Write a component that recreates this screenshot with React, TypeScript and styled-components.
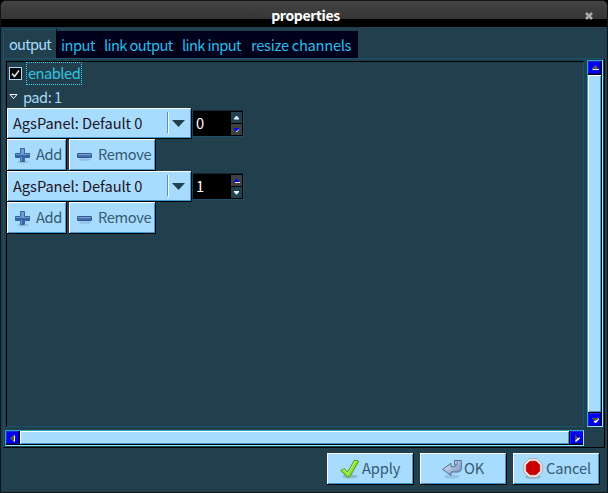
import React from "react";
import styled, { createGlobalStyle } from "styled-components";

const Global = createGlobalStyle`
  * { box-sizing: border-box; }
  body { margin: 0; background: #000; overflow: hidden; }
  button, input { font: inherit; margin: 0; }
`;

const FONT = `"Noto Sans CJK SC", "Noto Sans", sans-serif`;

const Window = styled.div`
  width: 608px;
  height: 493px;
  display: flex;
  flex-direction: column;
  background: #213f4d;
  border: 1px solid #101416;
  border-radius: 6px 6px 0 0;
  overflow: hidden;
  font: 14.67px/20px ${FONT};
  color: #a8d8f8;
  white-space: nowrap;
`;

const TitleBar = styled.header`
  height: 26px;
  flex: none;
  display: grid;
  grid-template-columns: 28px 1fr 28px;
  background: linear-gradient(#444 0, #353535 18px, #000 18px);
  color: #fff;
  font-weight: bold;
  text-align: center;
`;

const Title = styled.span`
  padding: 4px 0 0 3px;
  font-size: 14px;
  letter-spacing: -0.35px;
`;

const Close = styled.svg`
  margin: 9px 0 0 4px;
`;

const Notebook = styled.main`
  flex: none;
  height: 421px;
  padding: 2px 2px 0 2px;
`;

const Tabs = styled.nav`
  height: 29px;
  display: flex;
  align-items: flex-end;
`;

const Tab = styled.div<{ $width: number; $tracking: number; $active?: boolean }>`
  width: ${(p) => p.$width}px;
  height: ${(p) => (p.$active ? 29 : 27)}px;
  padding: ${(p) => (p.$active ? "4px 0 0 5px" : "4px 0 0 4px")};
  letter-spacing: ${(p) => p.$tracking}px;
  background: ${(p) => (p.$active ? "#213f4d" : "#00001c")};
  color: ${(p) => (p.$active ? "#a8dcff" : "#28bde8")};
  border: solid ${(p) => (p.$active ? "#1d5167" : "#061018")};
  border-width: ${(p) => (p.$active ? "1px 0 0 1px" : "0 1px 0 0")};
  border-right: 1px solid #000;
`;

const Page = styled.section`
  height: 390px;
  display: grid;
  grid-template-columns: 579px 16px;
  grid-template-rows: 367px 16px;
  column-gap: 3px;
  row-gap: 3px;
  padding: 1px 0 0 1px;
  border: 1px solid #1d5167;
  border-right-color: #000;
  border-bottom-color: #000;
`;

const View = styled.div`
  border: 1px solid #1d5167;
  border-top-color: #000;
  border-left-color: #000;
  margin: 1px 0 0 1px;
`;

const Line = styled.div<{ $h: number }>`
  height: ${(p) => p.$h}px;
  display: flex;
  align-items: flex-start;
`;

const Check = styled.span`
  width: 13px;
  height: 13px;
  margin: 5px 0 0 2px;
  border: 1px solid #a8dcff;
  background: #000;
  svg { display: block; }
`;

const CheckLabel = styled.span`
  width: 56px;
  height: 23px;
  margin: 0 0 0 4px;
  padding: 0 0 0 1px;
  border: 1px dotted #38d4f8;
  color: #31c4e0;
  letter-spacing: -0.5px;
`;

const Expander = styled.svg`
  margin: 6px 5px 0 2px;
`;

const PadLabel = styled.span`
  letter-spacing: -0.5px;
`;

const Combo = styled.div`
  width: 185px;
  height: 31px;
  display: flex;
  padding: 4px 0 0 6px;
  color: #20141c;
  background: #a8dcff;
  border: solid #000;
  border-width: 0 1px 1px 0;
  box-shadow: inset 1px 1px #fff, inset -1px -1px #4397cc;
`;

const ComboText = styled.span`
  width: 154px;
  padding-top: 1px;
  letter-spacing: -0.05px;
`;

const Raised = styled.button<{ $w: number }>`
  width: ${(p) => p.$w}px;
  height: 32px;
  display: flex;
  align-items: center;
  color: #345b70;
  background: #a8dcff;
  border: solid #000;
  border-width: 0 1px 1px 0;
  box-shadow: inset 1px 1px #fff, inset -1px -1px #4397cc;
`;

const PadButton = styled(Raised)`
  margin-right: 2px;
  padding: 0 0 1px 8px;
  letter-spacing: -0.35px;
  svg { margin: 2px 5px 0 0; }
`;

const DialogButton = styled(Raised)<{ $inset: number; $gap: number }>`
  padding: 0 0 2px ${(p) => p.$inset}px;
  letter-spacing: -0.15px;
  svg { margin: 2px ${(p) => p.$gap}px 0 0; }
`;

const Spin = styled.div`
  width: 51px;
  height: 27px;
  margin: 2px 0 0 1px;
  display: grid;
  grid-template-columns: 38px 11px;
  border: 1px solid #1d5167;
  border-top-color: #102630;
  border-left: 0;
  background: #000;
  color: #fff;
`;

const SpinValue = styled.span`
  padding: 2px 0 0 3px;
`;

const Steppers = styled.div`
  display: grid;
  grid-template-rows: 11px 11px;
  padding-top: 1px;
  gap: 1px;
`;

const Step = styled.div<{ $off?: boolean }>`
  background: ${(p) => (p.$off ? "#404040" : "#213f4d")};
  svg { display: block; }
`;

const ScrollBar = styled.div<{ $vertical?: boolean }>`
  display: flex;
  flex-direction: ${(p) => (p.$vertical ? "column" : "row")};
  border: 1px solid #25a9c4;
  border-right-color: #8cecff;
  border-bottom-color: #8cecff;
  background: #000;
`;

const ScrollButton = styled.div`
  width: 13px;
  height: 13px;
  flex: none;
  background: #0000f6;
  border: 1px solid #2424e0;
  border-right-color: #0000a0;
  border-bottom-color: #0000a0;
  svg { display: block; }
`;

const Thumb = styled.div<{ $vertical?: boolean }>`
  flex: 1;
  margin: ${(p) => (p.$vertical ? "1px 1px 1px 0" : "0 1px 1px 1px")};
  background: #a8dcff;
  box-shadow: inset 1px 1px #fff, inset -1px -1px #4397cc;
`;

const Actions = styled.footer`
  flex: 1;
  display: flex;
  justify-content: flex-end;
  gap: 6px;
  padding: 5px 7px 0 0;
`;

const Plus = () => (
  <svg width="16" height="17" viewBox="0 0 16 17">
    <ellipse cx="8" cy="15" rx="6" ry="1.5" fill="#78a5c6" opacity=".5" />
    <path d="M5.5 1.5h4v5h5v4h-5v4h-4v-4h-5v-4h5z" fill="#7399c8" stroke="#3465a4" strokeLinejoin="round" />
    <path d="M7 8h7v2H9v4H7v-4H1V8z" fill="#3465a4" />
  </svg>
);

const Minus = () => (
  <svg width="16" height="17" viewBox="0 0 16 17">
    <ellipse cx="8" cy="12.5" rx="6" ry="1.3" fill="#78a5c6" opacity=".5" />
    <rect x=".5" y="6.5" width="14" height="4" rx=".5" fill="#4670b0" stroke="#2d5790" />
    <path d="M1 7.5h13" stroke="#82a3d0" />
  </svg>
);

const ApplyIcon = () => (
  <svg width="20" height="20" viewBox="0 0 20 20">
    <ellipse cx="10" cy="17.5" rx="8" ry="2" fill="#638da1" opacity=".4" />
    <path d="M.8 11.5 4.4 9.6l3.2 3.6L14.6 1l4 1.2L9.8 17.8H7z" fill="#8ae234" stroke="#4e9a06" strokeLinejoin="round" />
    <path d="m2.6 11.7 1.5-.8 3.6 4L15.2 2.3l1.6.4" fill="none" stroke="#c3f58b" />
  </svg>
);

const OkIcon = () => (
  <svg width="20" height="20" viewBox="0 0 20 20">
    <defs>
      <linearGradient id="ok" x2="1" y2="1">
        <stop stopColor="#edf4ff" />
        <stop offset="1" stopColor="#6988b7" />
      </linearGradient>
    </defs>
    <ellipse cx="10" cy="17.5" rx="8" ry="2" fill="#638da1" opacity=".3" />
    <path d="M12.5 1.5h6.8v8c0 2.2-1.2 3.5-3.5 3.5H9v3.5L.7 10.3 9 4.3v3.4h3.4c1 0 1.3-.6 1.3-1.7h-1.2z" fill="url(#ok)" stroke="#506c92" strokeLinejoin="round" />
    <path d="M13.7 6h1.6V2.5" fill="none" stroke="#506c92" strokeWidth=".7" />
  </svg>
);

const StopIcon = () => (
  <svg width="20" height="21" viewBox="0 0 20 21">
    <ellipse cx="10" cy="18.9" rx="8" ry="1.8" fill="#638da1" opacity=".5" />
    <path d="M6 .7h8l5.3 5.5v7.6L14 19.3H6L.7 13.8V6.2z" fill="#eee" stroke="#a7a7a7" />
    <path d="M6.9 3.2h6.2L16.8 7v6l-3.7 3.8H6.9L3.2 13V7z" fill="#c00" stroke="#a40000" strokeWidth=".6" />
  </svg>
);

const SpinArrow = ({ down, blue }: { down?: boolean; blue?: boolean }) => (
  <svg width="11" height="11" viewBox="0 0 11 11">
    <path d={down ? "M3 4h5v1L6 7.5H5L3 5z" : "M3 7.5h5v-1L6 4H5L3 6.5z"} fill={blue ? "#0000f0" : "#e4f8ff"} />
    {blue && <path d={down ? "M8 5v1L6 8H5V7h1z" : "M4 7h5v1H4z"} fill="#eee" />}
  </svg>
);

const scrollShapes = {
  up: ["M2.5 7 6 3.2h1L9.5 7z", "M3.5 7H10v1H3.5z"],
  down: ["M2.5 4H10L6.5 8z", "M10 4.3V5.5L7 9H6L4.5 7h2z"],
  left: ["M7 2.5V10L3 6.5z", "M7 3.5h1V10L6 8.5h1z"],
  right: ["M4 2.5V10L7.5 6z", "M5 10 9 6.5v-1L7 6 4 9z"],
};

const ScrollArrow = ({ dir }: { dir: keyof typeof scrollShapes }) => (
  <svg width="11" height="11" viewBox="0 0 11 11">
    <path d={scrollShapes[dir][0]} fill="#55554c" />
    <path d={scrollShapes[dir][1]} fill="#fff" />
  </svg>
);

const ComboArrow = () => (
  <svg width="20" height="24" viewBox="0 0 20 24">
    <path d="M.5 0v21" stroke="#4397cc" />
    <path d="M1.5 0v22" stroke="#fff" />
    <path d="M5 8h13l-6.5 7z" fill="#213f4d" />
  </svg>
);

const Pad = ({ value, first }: { value: string; first?: boolean }) => (
  <>
    <Line $h={31}>
      <Combo>
        <ComboText>AgsPanel: Default 0</ComboText>
        <ComboArrow />
      </Combo>
      <Spin>
        <SpinValue>{value}</SpinValue>
        <Steppers>
          <Step $off={!first}><SpinArrow blue={!first} /></Step>
          <Step $off={first}><SpinArrow down blue={first} /></Step>
        </Steppers>
      </Spin>
    </Line>
    <Line $h={32}>
      <PadButton $w={60}><Plus />Add</PadButton>
      <PadButton $w={87}><Minus />Remove</PadButton>
    </Line>
  </>
);

export default function App() {
  return (
    <>
      <Global />
      <Window>
        <TitleBar>
          <span />
          <Title>properties</Title>
          <Close width="12" height="12" viewBox="0 0 12 12">
            <path d="m3 3 6 6M9 3 3 9" stroke="#aaa" strokeWidth="2.6" />
          </Close>
        </TitleBar>
        <Notebook>
          <Tabs>
            <Tab $width={54} $tracking={-0.8} $active>output</Tab>
            <Tab $width={43} $tracking={-0.5}>input</Tab>
            <Tab $width={78} $tracking={-0.6}>link output</Tab>
            <Tab $width={69} $tracking={-0.6}>link input</Tab>
            <Tab $width={111} $tracking={-0.28}>resize channels</Tab>
          </Tabs>
          <Page>
            <View>
              <Line $h={25}>
                <Check>
                  <svg width="11" height="11" viewBox="0 0 11 11">
                    <path d="m2 5.5 2.5 3L9 2.5" fill="none" stroke="#d5eaf4" strokeWidth="1.5" />
                  </svg>
                </Check>
                <CheckLabel>enabled</CheckLabel>
              </Line>
              <Line $h={21}>
                <Expander width="9" height="8" viewBox="0 0 9 8">
                  <path d="M1 1.5h7L4.5 5.5z" fill="#213f4d" stroke="#fff" />
                </Expander>
                <PadLabel>pad: 1</PadLabel>
              </Line>
              <Pad value="0" first />
              <Pad value="1" />
            </View>
            <ScrollBar $vertical>
              <ScrollButton><ScrollArrow dir="up" /></ScrollButton>
              <Thumb $vertical />
              <ScrollButton><ScrollArrow dir="down" /></ScrollButton>
            </ScrollBar>
            <ScrollBar>
              <ScrollButton><ScrollArrow dir="left" /></ScrollButton>
              <Thumb />
              <ScrollButton><ScrollArrow dir="right" /></ScrollButton>
            </ScrollBar>
          </Page>
        </Notebook>
        <Actions>
          <DialogButton $w={87} $inset={13} $gap={2}><ApplyIcon />Apply</DialogButton>
          <DialogButton $w={87} $inset={22} $gap={2}><OkIcon />OK</DialogButton>
          <DialogButton $w={87} $inset={10} $gap={3}><StopIcon />Cancel</DialogButton>
        </Actions>
      </Window>
    </>
  );
}
